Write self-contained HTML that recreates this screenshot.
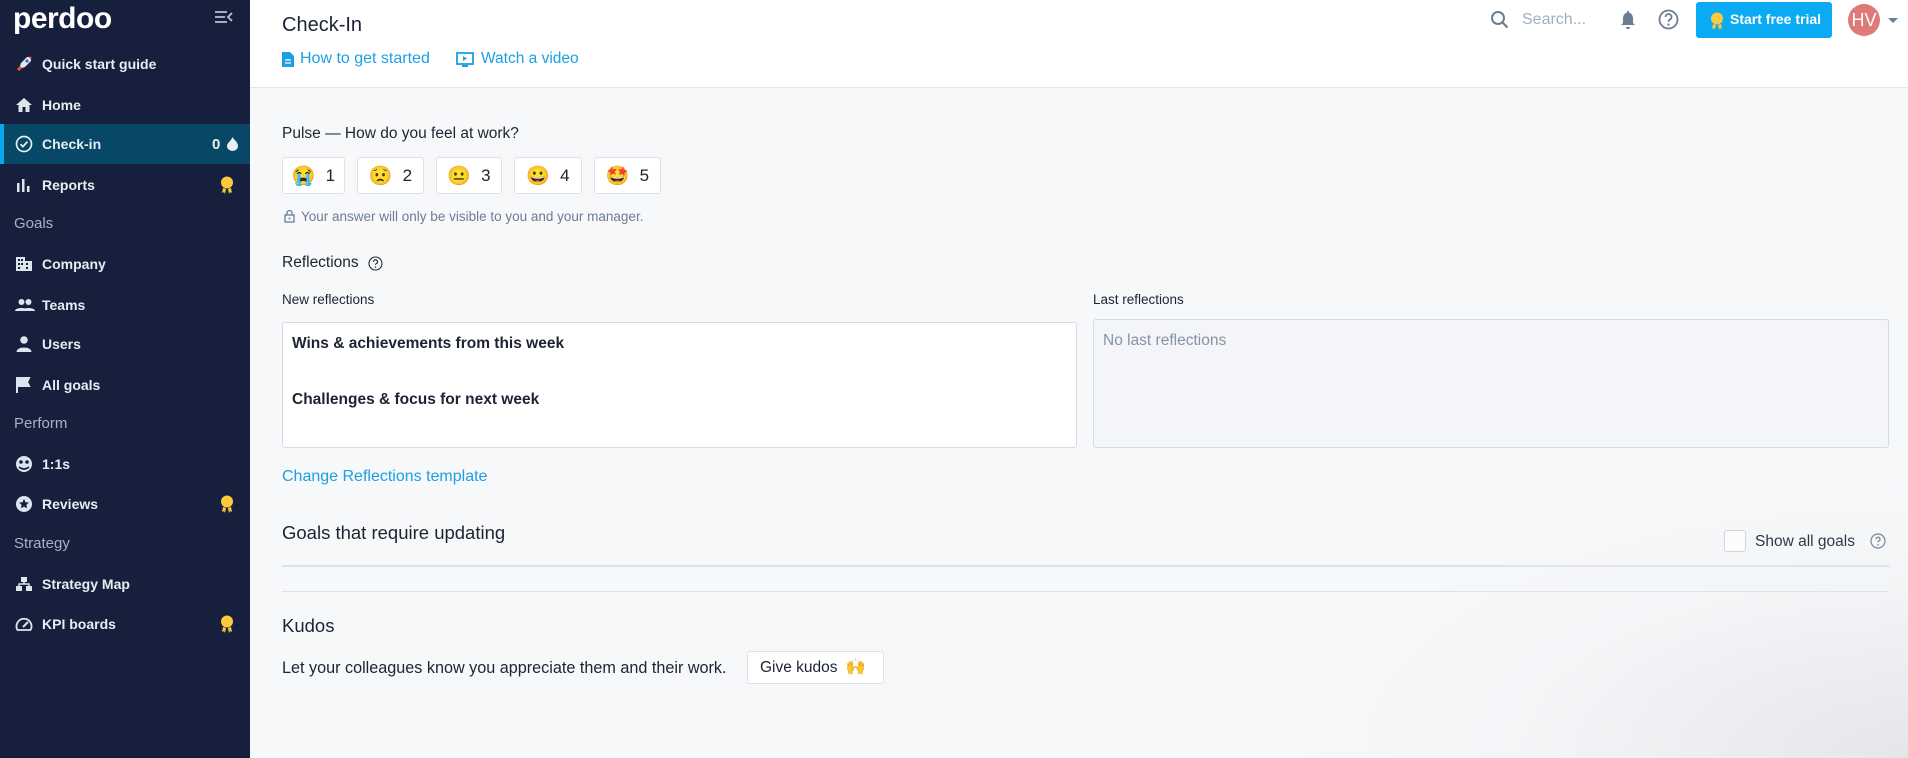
<!DOCTYPE html>
<html><head><meta charset="utf-8">
<style>
*{box-sizing:border-box;margin:0;padding:0}
body{width:1908px;height:758px;overflow:hidden;font-family:"Liberation Sans",sans-serif;background:#f7f8fa;position:relative;color:#1c2434}
.sb{position:absolute;left:0;top:0;width:250px;height:758px;background:#161f3c;color:#e6ebf2}
.logo{position:absolute;left:13px;top:4px;font-size:30px;font-weight:bold;color:#fff;letter-spacing:-0.5px;line-height:30px}
.tog{position:absolute;left:214px;top:9px}
.it{position:absolute;left:0;width:250px;height:40px;display:flex;align-items:center;font-size:14px;font-weight:bold;color:#e8edf4}
.it svg{position:absolute;left:15px}
.it span{position:absolute;left:42px}
.it.act{background:#074866;border-left:4px solid #10a6ee}
.it.act svg{left:11px}.it.act span{left:38px}
.sec{position:absolute;left:14px;font-size:15px;color:#a7b2c3}
.badge{position:absolute;left:220px}
.hdr{position:absolute;left:250px;top:0;width:1658px;height:88px;background:#fff;border-bottom:1px solid #e3e7ec}
.ab{position:absolute;white-space:nowrap}
.blue{color:#1c9fe6}
.ebtn{position:absolute;top:157px;height:37px;background:#fff;border:1px solid #dde2e8;border-radius:3px;display:flex;align-items:center;justify-content:center;gap:10px;font-size:17px;color:#222}
.box{position:absolute;border:1px solid #d5dbe2;border-radius:3px}
</style></head><body>
<div class="sb">
<div class="logo">perdoo</div>
<svg class="tog" width="20" height="16" viewBox="0 0 20 16"><path d="M1 3h12M1 8h10M1 13h12M18 4l-4 4 4 4" stroke="#b9c2d0" stroke-width="1.8" fill="none"/></svg>
<div class="it" style="top:44px"><svg width="18" height="18" viewBox="0 0 18 18"><path d="M4 14l2-6 6-6 4 0 0 4-6 6z" fill="#dfe7f0"/><circle cx="12" cy="6" r="1.6" fill="#2a6fd1"/><path d="M3 15l3-3" stroke="#e8572a" stroke-width="3"/><path d="M14 2l2 0 0 2" fill="#d33" stroke="#d33"/></svg><span>Quick start guide</span></div>
<div class="it" style="top:85px"><svg width="18" height="18" viewBox="0 0 18 18"><path d="M9 2L1 9h2.5v7h4v-5h3v5h4V9H17z" fill="#dce4ee"/></svg><span>Home</span></div>
<div class="it act" style="top:124px"><svg width="18" height="18" viewBox="0 0 18 18"><circle cx="9" cy="9" r="7.5" stroke="#e8edf4" stroke-width="1.7" fill="none"/><path d="M5.5 9.2l2.4 2.4 4.6-5" stroke="#e8edf4" stroke-width="1.8" fill="none"/></svg><span>Check-in</span><b style="position:absolute;left:208px;font-size:15px">0</b><svg style="left:223px" width="11" height="14" viewBox="0 0 11 14"><path d="M5.5 0C7 3 11 5 11 9a5.5 5 0 0 1-11 0C0 6 4 4 5.5 0z" fill="#e8edf4"/></svg></div>
<div class="it" style="top:165px"><svg width="18" height="18" viewBox="0 0 18 18"><rect x="2" y="7" width="2.5" height="9" fill="#dce4ee"/><rect x="7" y="3" width="2.5" height="13" fill="#dce4ee"/><rect x="12" y="10" width="2.5" height="6" fill="#dce4ee"/></svg><span>Reports</span></div>
<div class="sec" style="top:215px">Goals</div>
<div class="it" style="top:244px"><svg width="18" height="18" viewBox="0 0 18 18"><path d="M1 16V2h9v4h7v10z" fill="#dce4ee"/><g fill="#161f3c"><rect x="3" y="4" width="2" height="2"/><rect x="6" y="4" width="2" height="2"/><rect x="3" y="8" width="2" height="2"/><rect x="6" y="8" width="2" height="2"/><rect x="11" y="8" width="2" height="2"/><rect x="11" y="12" width="2" height="2"/><rect x="3" y="12" width="2" height="2"/></g></svg><span>Company</span></div>
<div class="it" style="top:285px"><svg width="20" height="18" viewBox="0 0 20 18"><circle cx="6.5" cy="6" r="3" fill="#dce4ee"/><circle cx="13.5" cy="6" r="3" fill="#dce4ee"/><path d="M0 15c0-4 13-4 13 0zM7 15c0-4 13-4 13 0z" fill="#dce4ee"/></svg><span>Teams</span></div>
<div class="it" style="top:324px"><svg width="18" height="18" viewBox="0 0 18 18"><circle cx="9" cy="5" r="3.8" fill="#dce4ee"/><path d="M1.5 17c0-6 15-6 15 0z" fill="#dce4ee"/></svg><span>Users</span></div>
<div class="it" style="top:365px"><svg width="18" height="18" viewBox="0 0 18 18"><path d="M2 1v16M2 2h12l-2 4 2 4H2" stroke="#dce4ee" stroke-width="2" fill="#dce4ee"/></svg><span>All goals</span></div>
<div class="sec" style="top:415px">Perform</div>
<div class="it" style="top:444px"><svg width="18" height="18" viewBox="0 0 18 18"><circle cx="9" cy="9" r="8" fill="#dce4ee"/><circle cx="6" cy="7" r="1.8" fill="#161f3c"/><circle cx="12" cy="7" r="1.8" fill="#161f3c"/><path d="M4 12q5 4 10 0" stroke="#161f3c" stroke-width="1.6" fill="none"/></svg><span>1:1s</span></div>
<div class="it" style="top:484px"><svg width="18" height="18" viewBox="0 0 18 18"><circle cx="9" cy="9" r="8" fill="#dce4ee"/><path d="M9 4l1.5 3.2 3.4.4-2.5 2.3.7 3.4L9 11.6l-3.1 1.7.7-3.4-2.5-2.3 3.4-.4z" fill="#161f3c"/></svg><span>Reviews</span></div>
<div class="sec" style="top:535px">Strategy</div>
<div class="it" style="top:564px"><svg width="18" height="18" viewBox="0 0 18 18"><rect x="6" y="2" width="6" height="5" fill="#dce4ee"/><rect x="1" y="11" width="6" height="5" fill="#dce4ee"/><rect x="11" y="11" width="6" height="5" fill="#dce4ee"/><path d="M9 7v2M4 11V9h10v2" stroke="#dce4ee" stroke-width="1.5" fill="none"/></svg><span>Strategy Map</span></div>
<div class="it" style="top:604px"><svg width="18" height="18" viewBox="0 0 18 18"><path d="M2.5 15a7.5 7.5 0 1 1 13 0z" stroke="#dce4ee" stroke-width="1.8" fill="none"/><path d="M8 12l5-5" stroke="#dce4ee" stroke-width="2"/></svg><span>KPI boards</span></div>
<svg class="badge" style="top:176px" width="14" height="19" viewBox="0 0 14 19"><circle cx="7" cy="6.5" r="6" fill="#fcc83c"/><path d="M3 12l-1 5 2-1 1 2 1-5M11 12l1 5-2-1-1 2-1-5" fill="#fcc83c"/></svg>
<svg class="badge" style="top:495px" width="14" height="19" viewBox="0 0 14 19"><circle cx="7" cy="6.5" r="6" fill="#fcc83c"/><path d="M3 12l-1 5 2-1 1 2 1-5M11 12l1 5-2-1-1 2-1-5" fill="#fcc83c"/></svg>
<svg class="badge" style="top:615px" width="14" height="19" viewBox="0 0 14 19"><circle cx="7" cy="6.5" r="6" fill="#fcc83c"/><path d="M3 12l-1 5 2-1 1 2 1-5M11 12l1 5-2-1-1 2-1-5" fill="#fcc83c"/></svg>
</div>

<div class="hdr"></div>
<div class="ab" style="left:282px;top:14px;font-size:20px;color:#1c2434">Check-In</div>
<svg class="ab" style="left:282px;top:52px" width="12" height="15" viewBox="0 0 12 15"><path d="M0 0h8l4 4v11H0z" fill="#1c9fe6"/><path d="M3 8h6M3 11h6" stroke="#fff" stroke-width="1.2"/></svg>
<div class="ab blue" style="left:300px;top:50px;font-size:16px">How to get started</div>
<svg class="ab" style="left:456px;top:52px" width="18" height="16" viewBox="0 0 18 16"><rect x="1" y="1" width="16" height="11" stroke="#1c9fe6" stroke-width="1.8" fill="none"/><path d="M7 4l4 2.5L7 9z" fill="#1c9fe6"/><path d="M6 14h6" stroke="#1c9fe6" stroke-width="2"/></svg>
<div class="ab blue" style="left:481px;top:50px;font-size:15.5px">Watch a video</div>

<svg class="ab" style="left:1490px;top:10px" width="20" height="20" viewBox="0 0 20 20"><circle cx="8" cy="8" r="6" stroke="#6a7d94" stroke-width="2" fill="none"/><path d="M12.5 12.5l5 5" stroke="#6a7d94" stroke-width="2.2"/></svg>
<div class="ab" style="left:1522px;top:11px;font-size:16px;color:#a3afbd">Search...</div>
<svg class="ab" style="left:1620px;top:10px" width="16" height="20" viewBox="0 0 16 20"><path d="M8 1a1 1 0 0 1 1 1.5C12 3.5 13 6 13 9v4l2 2H1l2-2V9c0-3 1-5.5 4-6.5A1 1 0 0 1 8 1z" fill="#6a7d94"/><path d="M6 17a2 2 0 0 0 4 0z" fill="#6a7d94"/></svg>
<svg class="ab" style="left:1658px;top:9px" width="21" height="21" viewBox="0 0 21 21"><circle cx="10.5" cy="10.5" r="9" stroke="#6a7d94" stroke-width="1.8" fill="none"/><path d="M7.5 8a3 3 0 1 1 4 2.8c-.8.4-1 1-1 2" stroke="#6a7d94" stroke-width="1.8" fill="none"/><circle cx="10.5" cy="15.5" r="1.1" fill="#6a7d94"/></svg>
<div class="ab" style="left:1696px;top:2px;width:136px;height:36px;background:#0aabf2;border-radius:3px"></div>
<svg class="ab" style="left:1710px;top:12px" width="14" height="18" viewBox="0 0 14 18"><circle cx="7" cy="6.5" r="6" fill="#fcc83c"/><path d="M3 12l-1 5 2-1 1 2 1-5M11 12l1 5-2-1-1 2-1-5" fill="#fcc83c"/></svg>
<div class="ab" style="left:1730px;top:11px;font-size:14px;font-weight:bold;color:#fff">Start free trial</div>
<div class="ab" style="left:1848px;top:4px;width:32px;height:32px;border-radius:50%;background:#de7a78;color:#fff;font-size:18px;line-height:32px;text-align:center">HV</div>
<svg class="ab" style="left:1888px;top:18px" width="10" height="6" viewBox="0 0 10 6"><path d="M0 0h10L5 5z" fill="#6a7d94"/></svg>

<div class="ab" style="left:282px;top:125px;font-size:15.5px">Pulse — How do you feel at work?</div>
<div class="ebtn" style="left:282px;width:63px"><span style="font-size:19px">😭</span>1</div>
<div class="ebtn" style="left:357px;width:67px"><span style="font-size:19px">😟</span>2</div>
<div class="ebtn" style="left:436px;width:66px"><span style="font-size:19px">😐</span>3</div>
<div class="ebtn" style="left:514px;width:68px"><span style="font-size:19px">😀</span>4</div>
<div class="ebtn" style="left:594px;width:67px"><span style="font-size:19px">🤩</span>5</div>
<svg class="ab" style="left:284px;top:209px" width="11" height="14" viewBox="0 0 11 14"><rect x="1" y="6" width="9" height="7" stroke="#6a7d94" stroke-width="1.3" fill="none"/><path d="M3 6V4a2.5 2.5 0 0 1 5 0v2" stroke="#6a7d94" stroke-width="1.3" fill="none"/><circle cx="5.5" cy="9.5" r="1" fill="#6a7d94"/></svg>
<div class="ab" style="left:301px;top:209px;font-size:13.5px;color:#6a7d94">Your answer will only be visible to you and your manager.</div>

<div class="ab" style="left:282px;top:254px;font-size:15.5px">Reflections</div>
<svg class="ab" style="left:368px;top:256px" width="15" height="15" viewBox="0 0 15 15"><circle cx="7.5" cy="7.5" r="6.5" stroke="#1c2434" stroke-width="1.1" fill="none"/><path d="M5.5 5.8a2 2 0 1 1 2.6 1.9c-.5.2-.6.6-.6 1.2" stroke="#1c2434" stroke-width="1.1" fill="none"/><circle cx="7.5" cy="11" r=".8" fill="#1c2434"/></svg>
<div class="ab" style="left:282px;top:292px;font-size:13.5px">New reflections</div>
<div class="ab" style="left:1093px;top:292px;font-size:13.5px">Last reflections</div>
<div class="box" style="left:282px;top:322px;width:795px;height:126px;background:#fff"></div>
<div class="ab" style="left:292px;top:335px;font-size:15.5px;font-weight:bold;color:#1c2434">Wins &amp; achievements from this week</div>
<div class="ab" style="left:292px;top:391px;font-size:15.5px;font-weight:bold;color:#1c2434">Challenges &amp; focus for next week</div>
<div class="box" style="left:1093px;top:319px;width:796px;height:129px;background:#f3f5f8"></div>
<div class="ab" style="left:1103px;top:332px;font-size:15.5px;color:#8593a3">No last reflections</div>
<div class="ab blue" style="left:282px;top:468px;font-size:16px">Change Reflections template</div>

<div class="ab" style="left:282px;top:522px;font-size:18.5px">Goals that require updating</div>
<div class="ab" style="left:1724px;top:530px;width:22px;height:22px;border:1.5px solid #cdd5de;border-radius:3px;background:#fff"></div>
<div class="ab" style="left:1755px;top:533px;font-size:15.5px">Show all goals</div>
<svg class="ab" style="left:1870px;top:533px" width="16" height="16" viewBox="0 0 16 16"><circle cx="8" cy="8" r="7" stroke="#6a7d94" stroke-width="1.2" fill="none"/><path d="M6 6.2a2 2 0 1 1 2.7 1.9c-.5.2-.7.6-.7 1.3" stroke="#6a7d94" stroke-width="1.2" fill="none"/><circle cx="8" cy="11.8" r=".8" fill="#6a7d94"/></svg>
<div class="ab" style="left:282px;top:565px;width:1607px;height:2px;background:#dde3e9"></div>
<div class="ab" style="left:282px;top:591px;width:1607px;height:1px;background:#dde3e9"></div>

<div class="ab" style="left:282px;top:615px;font-size:18.5px">Kudos</div>
<div class="ab" style="left:282px;top:659px;font-size:16.2px">Let your colleagues know you appreciate them and their work.</div>
<div class="ab" style="left:747px;top:651px;width:137px;height:33px;background:#fff;border:1px solid #dde2e8;border-radius:3px;font-size:15.5px;line-height:31px;padding-left:12px">Give kudos <span style="font-size:16px;margin-left:4px">🙌</span></div>
<div class="ab" style="left:1300px;top:480px;width:608px;height:278px;background:radial-gradient(ellipse at 100% 100%,rgba(205,208,212,0.45),rgba(225,227,230,0.15) 45%,rgba(247,248,250,0) 75%);pointer-events:none"></div>
</body></html>
